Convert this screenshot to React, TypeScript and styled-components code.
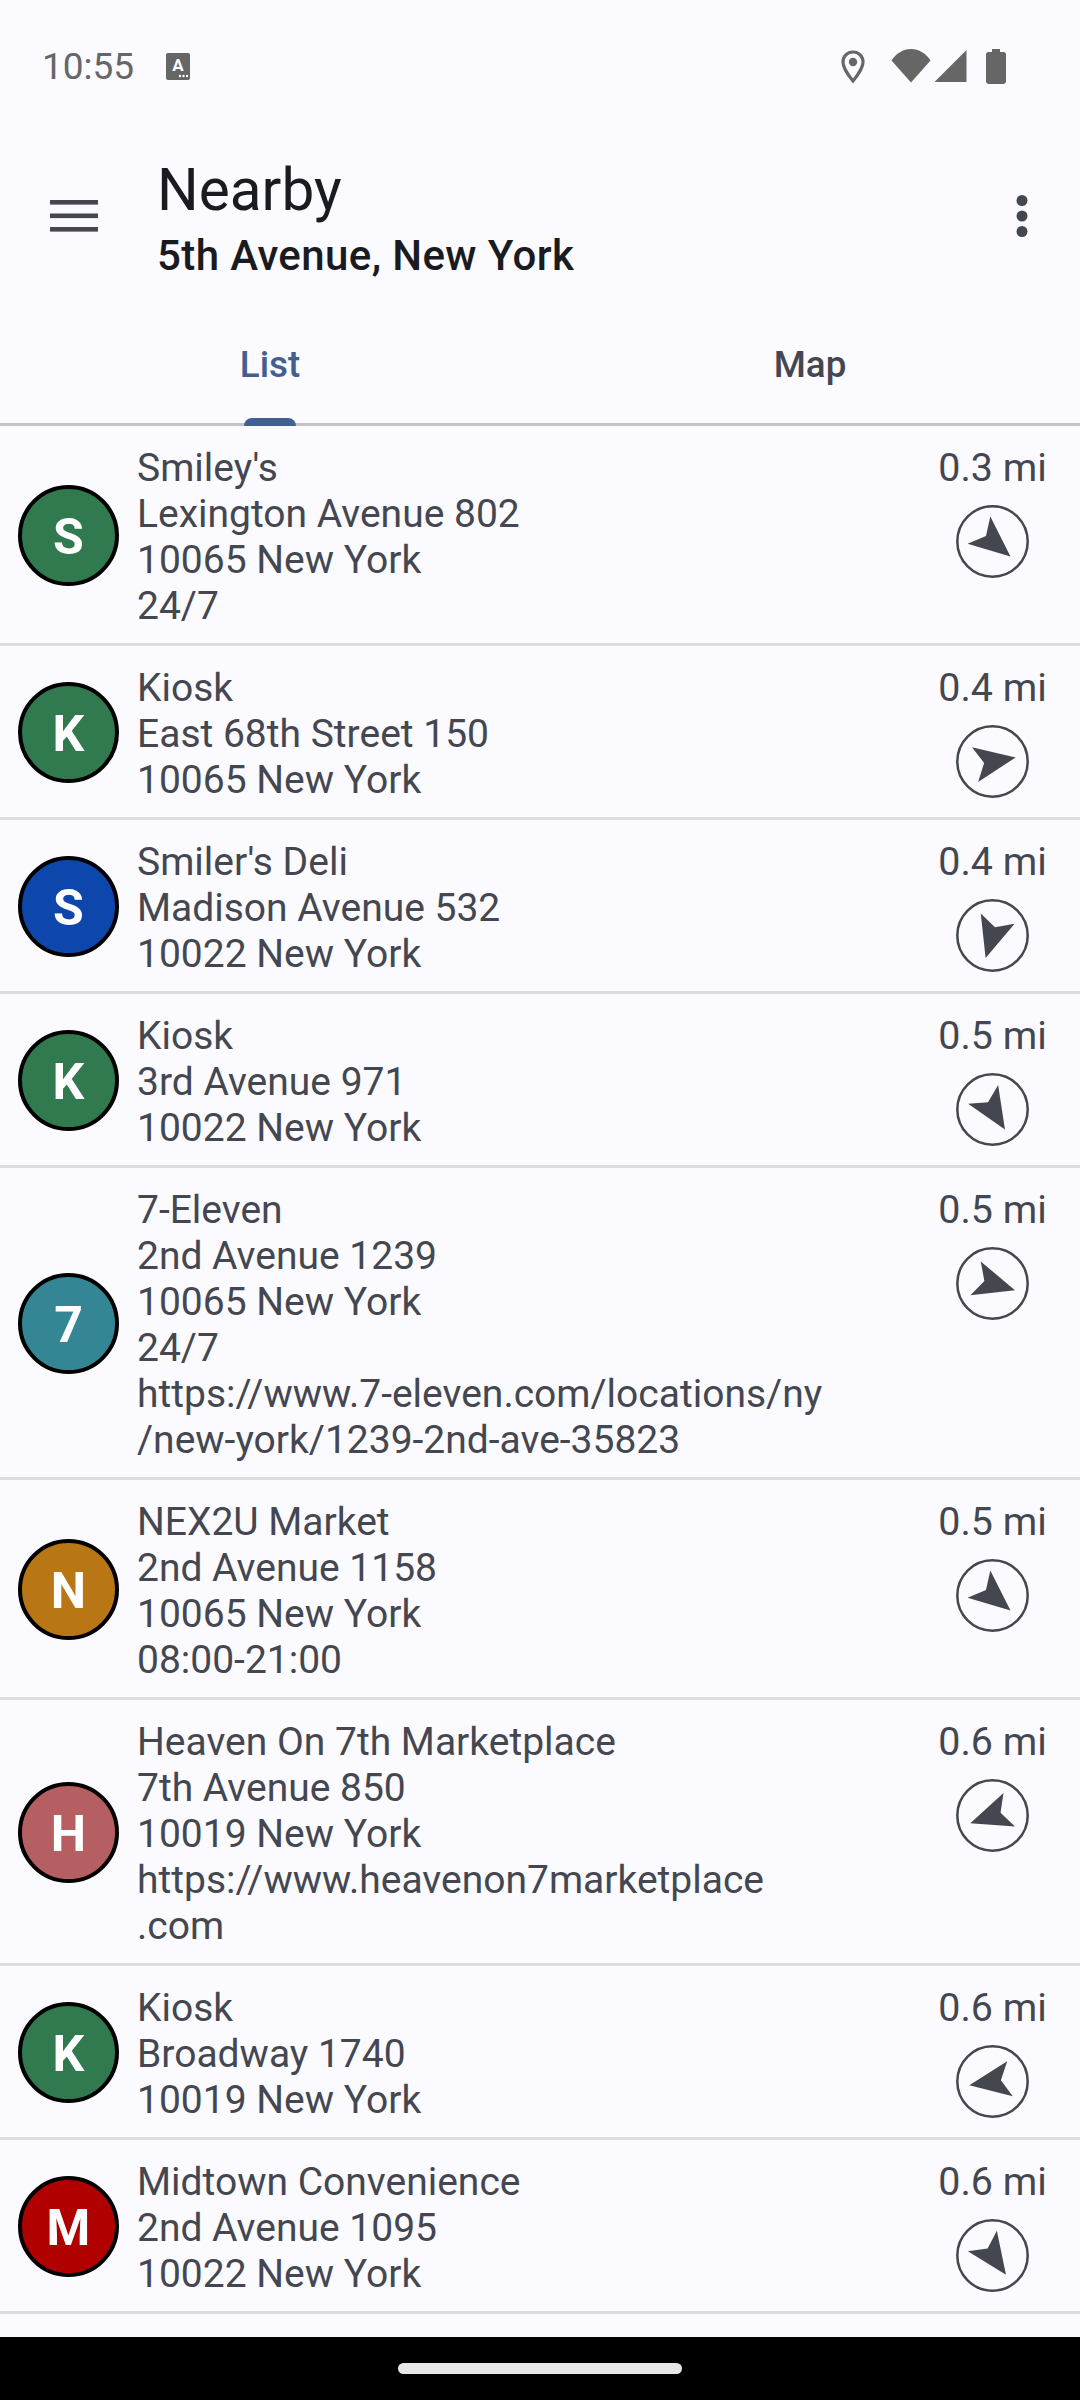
import React from "react";
import styled, { createGlobalStyle } from "styled-components";

const Global = createGlobalStyle`
  html, body { margin: 0; padding: 0; background: #fafaff; }
  #root { width: 1080px; height: 2400px; }
`;

const Screen = styled.div`
  width: 1080px;
  height: 2400px;
  display: flex;
  flex-direction: column;
  background: #fafaff;
  font-family: Roboto, "Liberation Sans", sans-serif;
  overflow: hidden;
`;

const StatusBar = styled.div`
  height: 100px;
  flex: none;
  display: flex;
  align-items: flex-start;
  padding: 49px 74px 0 42px;
  box-sizing: border-box;
  color: #666666;
`;

const Clock = styled.span`
  font-size: 37px;
  line-height: 36px;
  width: 124px;
`;

const StatusSpacer = styled.div`
  flex: 1;
`;

const StatusIcon = styled.svg`
  display: block;
  flex: none;
`;

const Toolbar = styled.div`
  height: 180px;
  flex: none;
  display: flex;
  align-items: flex-start;
  box-sizing: border-box;
  padding: 0 52px 0 50px;
`;

const Menu = styled.svg`
  margin-top: 100px;
  display: block;
  flex: none;
`;

const Titles = styled.div`
  flex: 1;
  padding: 51px 0 0 59px;
`;

const Title = styled.div`
  font-size: 58.5px;
  line-height: 79px;
  color: #1a1b20;
`;

const Subtitle = styled.div`
  font-size: 42px;
  line-height: 52px;
  font-weight: 500;
  letter-spacing: 0.39px;
  color: #1a1b20;
`;

const More = styled.svg`
  margin-top: 95px;
  display: block;
  flex: none;
`;

const Tabs = styled.div`
  height: 146px;
  flex: none;
  display: flex;
  box-sizing: border-box;
  border-bottom: 3px solid #c4c4c8;
`;

const Tab = styled.div<{ $active?: boolean }>`
  flex: 1;
  position: relative;
  display: flex;
  justify-content: center;
  padding-top: 61px;
  font-size: 36.75px;
  line-height: 48px;
  font-weight: 500;
  color: ${(p) => (p.$active ? "#415f91" : "#44474f")};
`;

const Indicator = styled.div`
  position: absolute;
  bottom: -3px;
  left: 244px;
  width: 52px;
  height: 8px;
  border-radius: 8px 8px 0 0;
  background: #415f91;
`;

const List = styled.div`
  flex: 1;
  min-height: 0;
  overflow: hidden;
`;

const Row = styled.div`
  display: flex;
  align-items: stretch;
  box-sizing: border-box;
  padding: 15px 35px 14px 18px;
  border-bottom: 3px solid #dcdce2;
`;

const AvatarCol = styled.div`
  flex: none;
  display: flex;
  align-items: center;
  margin-right: 18px;
`;

const Avatar = styled.div<{ $color: string }>`
  width: 101px;
  height: 101px;
  box-sizing: border-box;
  border-radius: 50%;
  border: 4.5px solid #000;
  background: ${(p) => p.$color};
  color: #fff;
  font-size: 50px;
  font-weight: 700;
  display: flex;
  align-items: center;
  justify-content: center;
  line-height: 1;
  padding-top: 4px;
`;

const Info = styled.div`
  flex: 1;
  min-width: 0;
  padding-top: 4px;
`;

const Line = styled.div`
  font-size: 39px;
  line-height: 46px;
  color: #44474f;
  white-space: nowrap;
`;

const Side = styled.div`
  flex: none;
  width: 105px;
  padding-top: 4px;
  display: flex;
  flex-direction: column;
  align-items: center;
`;

const Distance = styled.div`
  font-size: 39.375px;
  line-height: 46px;
  color: #44474f;
  white-space: nowrap;
`;

const Compass = styled.svg`
  display: block;
  flex: none;
  margin-top: 14px;
`;

const GestureBar = styled.div`
  height: 63px;
  flex: none;
  background: #000;
  display: flex;
  justify-content: center;
  padding-top: 26px;
  box-sizing: border-box;
`;

const Handle = styled.div`
  width: 284px;
  height: 11px;
  border-radius: 6px;
  background: #e8e8e8;
`;

const GREEN = "#317a4f";

const places = [
  { letter: "S", color: GREEN, lines: ["Smiley's", "Lexington Avenue 802", "10065 New York", "24/7"], dist: "0.3 mi", bearing: 130 },
  { letter: "K", color: GREEN, lines: ["Kiosk", "East 68th Street 150", "10065 New York"], dist: "0.4 mi", bearing: 80 },
  { letter: "S", color: "#0d47ab", lines: ["Smiler's Deli", "Madison Avenue 532", "10022 New York"], dist: "0.4 mi", bearing: 197 },
  { letter: "K", color: GREEN, lines: ["Kiosk", "3rd Avenue 971", "10022 New York"], dist: "0.5 mi", bearing: 148 },
  { letter: "7", color: "#348695", lines: ["7-Eleven", "2nd Avenue 1239", "10065 New York", "24/7", "https://www.7-eleven.com/locations/ny", "/new-york/1239-2nd-ave-35823"], dist: "0.5 mi", bearing: 107 },
  { letter: "N", color: "#b87714", lines: ["NEX2U Market", "2nd Avenue 1158", "10065 New York", "08:00-21:00"], dist: "0.5 mi", bearing: 130 },
  { letter: "H", color: "#b55f62", lines: ["Heaven On 7th Marketplace", "7th Avenue 850", "10019 New York", "https://www.heavenon7marketplace", ".com"], dist: "0.6 mi", bearing: 251 },
  { letter: "K", color: GREEN, lines: ["Kiosk", "Broadway 1740", "10019 New York"], dist: "0.6 mi", bearing: 261 },
  { letter: "M", color: "#b00000", lines: ["Midtown Convenience", "2nd Avenue 1095", "10022 New York"], dist: "0.6 mi", bearing: 145 },
];

const CompassIcon = ({ bearing }: { bearing: number }) => (
  <Compass width="73" height="73" viewBox="-36.5 -36.5 73 73">
    <circle r="35.2" fill="none" stroke="#44474f" strokeWidth="2.5" />
    <polygon points="0,-23.5 17.7,17.7 0,8.5 -17.7,17.7" fill="#44474f" transform={`rotate(${bearing})`} />
  </Compass>
);

export default function App() {
  return (
    <Screen>
      <Global />
      <StatusBar>
        <Clock>10:55</Clock>
        <StatusIcon width="24" height="27" viewBox="0 0 24 27" style={{ marginTop: 4 }}>
          <rect width="24" height="27" rx="2" fill="#666" />
          <text x="12" y="18" textAnchor="middle" fontFamily="Roboto" fontWeight="700" fontSize="17" fill="#fff">A</text>
          <circle cx="14" cy="23" r="1.2" fill="#fff" />
          <circle cx="17.5" cy="23" r="1.2" fill="#fff" />
          <circle cx="21" cy="23" r="1.2" fill="#fff" />
        </StatusIcon>
        <StatusSpacer />
        <StatusIcon width="24" height="34" viewBox="0 0 24 34" style={{ marginTop: 1, marginRight: 26 }}>
          <path d="M12 2C6.2 2 2 6.4 2 12c0 7 10 19 10 19s10-12 10-19C22 6.4 17.800 2 12 2z" fill="none" stroke="#666" strokeWidth="3.2" />
          <circle cx="12" cy="12" r="4.2" fill="#666" />
        </StatusIcon>
        <StatusIcon width="40" height="34" viewBox="0 0 40 34" style={{ marginRight: 3 }}>
          <path d="M0.500 11.500C5 4.500 12 0 20 0s15 4.500 19.500 11.500L20 33.500z" fill="#666" />
        </StatusIcon>
        <StatusIcon width="33" height="34" viewBox="0 0 33 34" style={{ marginRight: 19 }}>
          <path d="M32.500 1V33H0.500z" fill="#666" />
        </StatusIcon>
        <StatusIcon width="20" height="35" viewBox="0 0 20 35">
          <path d="M6 0h8v3h3.500A2.500 2.500 0 0 1 20 5.500V32a3 3 0 0 1-3 3H3a3 3 0 0 1-3-3V5.500A2.500 2.500 0 0 1 2.500 3H6z" fill="#666" />
        </StatusIcon>
      </StatusBar>
      <Toolbar>
        <Menu width="48" height="32" viewBox="0 0 48 32">
          <rect y="0" width="48" height="4.600" fill="#44474f" />
          <rect y="13.500" width="48" height="4.600" fill="#44474f" />
          <rect y="27" width="48" height="4.600" fill="#44474f" />
        </Menu>
        <Titles>
          <Title>Nearby</Title>
          <Subtitle>5th Avenue, New York</Subtitle>
        </Titles>
        <More width="12" height="42" viewBox="0 0 12 42">
          <circle cx="6" cy="5.500" r="5.500" fill="#44474f" />
          <circle cx="6" cy="21" r="5.500" fill="#44474f" />
          <circle cx="6" cy="36.500" r="5.500" fill="#44474f" />
        </More>
      </Toolbar>
      <Tabs>
        <Tab $active>
          List
          <Indicator />
        </Tab>
        <Tab>Map</Tab>
      </Tabs>
      <List>
        {places.map((p, i) => (
          <Row key={i}>
            <AvatarCol>
              <Avatar $color={p.color}>{p.letter}</Avatar>
            </AvatarCol>
            <Info>
              {p.lines.map((l, j) => (
                <Line key={j}>{l}</Line>
              ))}
            </Info>
            <Side>
              <Distance>{p.dist}</Distance>
              <CompassIcon bearing={p.bearing} />
            </Side>
          </Row>
        ))}
      </List>
      <GestureBar>
        <Handle />
      </GestureBar>
    </Screen>
  );
}
